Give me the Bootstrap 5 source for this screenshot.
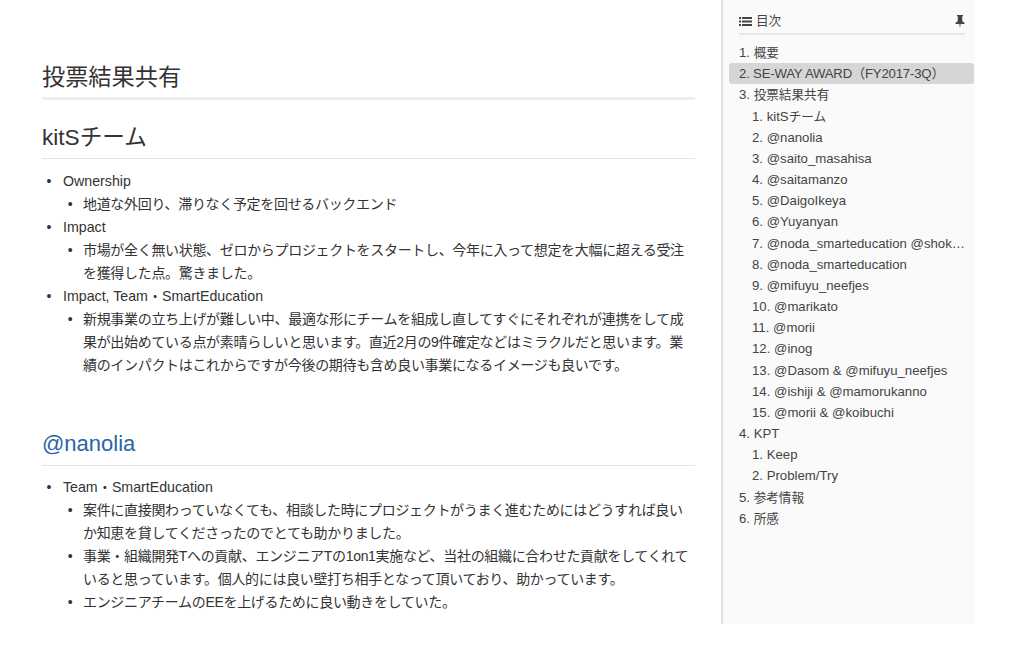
<!DOCTYPE html>
<html lang="ja">
<head>
  <meta charset="UTF-8" />
  <meta name="viewport" content="width=device-width, initial-scale=1.0"/>
  <title>投票結果共有</title>
  <link href="https://cdn.jsdelivr.net/npm/bootstrap@5.3.2/dist/css/bootstrap.min.css" rel="stylesheet"/>
  <style>
    html, body { height: 646px; overflow: hidden; }
    body {
      background: #fff;
      color: #333;
      font-family: "Liberation Sans", "Noto Sans CJK JP", sans-serif;
      font-size: 14px;
    }
    .page-wrap { height: 624px; }
    .doc-body { width: 653px; margin-left: 42px; margin-right: 26px; overflow: hidden; }
    .doc-title {
      font-size: 23.2px; font-weight: 400; line-height: 32px;
      margin: 61px 0 0; padding-bottom: 4px;
      border-bottom: 3px solid #eee;
    }
    .doc-sub {
      font-size: 22px; font-weight: 400; line-height: 30px;
      margin: 0; padding-bottom: 5px;
      border-bottom: 1px solid #e5e5e5;
    }
    .doc-sub.first { margin-top: 23px; font-size: 22.6px; }
    .doc-sub.next { margin-top: 52px; padding-bottom: 6px; }
    .doc-sub a { color: #2a64a8; text-decoration: none; }
    .doc-list { margin: 11px 0 0; padding-left: 21px; line-height: 23px; font-size: 14.2px; }
    .doc-sub.next + .doc-list { margin-top: 10px; }
    .doc-list ul { margin: 0; padding-left: 20px; list-style: disc; font-size: 14px; letter-spacing: -.32px; }
    .doc-list li::marker { content: "•\00a0\00a0\00a0"; font-size: 14px; }
    .toc-pane {
      width: 254px; height: 624px; flex: none;
      background: #fafafa; border-left: 2px solid #e2e2e2;
      font-size: 13.2px; color: #444;
    }
    .toc-ja { font-size: 12.6px; }
    .toc-head {
      margin: 12px 10px 0 16px; height: 23px; padding-bottom: 3px;
      border-bottom: 2px solid #e6e6e6;
    }
    .toc-list, .toc-list ol { list-style: none; margin: 0; padding: 0; }
    .toc-list { margin-top: 7px; }
    .toc-list li > span { display: block; height: 21.18px; line-height: 21px; padding-left: 16px; white-space: nowrap; overflow: hidden; text-overflow: ellipsis; }
    .toc-list ol li > span { padding-left: 29px; padding-right: 9px; }
    .toc-list li > span.on { background: #d6d6d6; border-radius: 3px; margin: 0 1px 0 6px; padding-left: 10px; letter-spacing: -.2px; }
  </style>
</head>
<body>
  <div class="page-wrap d-flex">
    <main class="doc-body">
      <h2 class="doc-title">投票結果共有</h2>

      <h3 class="doc-sub first">kitSチーム</h3>
      <ul class="doc-list">
        <li>Ownership
          <ul><li>地道な外回り、滞りなく予定を回せるバックエンド</li></ul>
        </li>
        <li>Impact
          <ul><li>市場が全く無い状態、ゼロからプロジェクトをスタートし、今年に入って想定を大幅に超える受注を獲得した点。驚きました。</li></ul>
        </li>
        <li>Impact, Team・SmartEducation
          <ul><li>新規事業の立ち上げが難しい中、最適な形にチームを組成し直してすぐにそれぞれが連携をして成果が出始めている点が素晴らしいと思います。直近2月の9件確定などはミラクルだと思います。業績のインパクトはこれからですが今後の期待も含め良い事業になるイメージも良いです。</li></ul>
        </li>
      </ul>

      <h3 class="doc-sub next"><a href="#">@nanolia</a></h3>
      <ul class="doc-list">
        <li>Team・SmartEducation
          <ul>
            <li>案件に直接関わっていなくても、相談した時にプロジェクトがうまく進むためにはどうすれば良いか知恵を貸してくださったのでとても助かりました。</li>
            <li>事業・組織開発Tへの貢献、エンジニアTの1on1実施など、当社の組織に合わせた貢献をしてくれていると思っています。個人的には良い壁打ち相手となって頂いており、助かっています。</li>
            <li>エンジニアチームのEEを上げるために良い動きをしていた。</li>
          </ul>
        </li>
      </ul>
    </main>

    <aside class="toc-pane">
      <div class="toc-head d-flex align-items-center justify-content-between">
        <span class="d-flex align-items-center gap-1">
          <svg width="13" height="11" viewBox="0 0 13 11" fill="#444"><path d="M0 1h2v2H0zM3 1h10v2H3zM0 4.5h2v2H0zM3 4.5h10v2H3zM0 8h2v2H0zM3 8h10v2H3z"/></svg>
          <span class="toc-ja">目次</span>
        </span>
        <svg width="10" height="13" viewBox="0 0 10 13" fill="#444"><path d="M2 0h6v1.2H7.2V6L9.5 8v1H5.6L5 13l-.6-4H.5V8l2.3-2V1.2H2z"/></svg>
      </div>
      <ol class="toc-list">
        <li><span>1. <span class="toc-ja">概要</span></span></li>
        <li><span class="on">2. SE-WAY AWARD（FY2017-3Q）</span></li>
        <li><span>3. <span class="toc-ja">投票結果共有</span></span>
          <ol>
            <li><span>1. kitS<span class="toc-ja">チーム</span></span></li>
            <li><span>2. @nanolia</span></li>
            <li><span>3. @saito_masahisa</span></li>
            <li><span>4. @saitamanzo</span></li>
            <li><span>5. @DaigoIkeya</span></li>
            <li><span>6. @Yuyanyan</span></li>
            <li><span>7. @noda_smarteducation @shokota</span></li>
            <li><span>8. @noda_smarteducation</span></li>
            <li><span>9. @mifuyu_neefjes</span></li>
            <li><span>10. @marikato</span></li>
            <li><span>11. @morii</span></li>
            <li><span>12. @inog</span></li>
            <li><span>13. @Dasom &amp; @mifuyu_neefjes</span></li>
            <li><span>14. @ishiji &amp; @mamorukanno</span></li>
            <li><span>15. @morii &amp; @koibuchi</span></li>
          </ol>
        </li>
        <li><span>4. KPT</span>
          <ol>
            <li><span>1. Keep</span></li>
            <li><span>2. Problem/Try</span></li>
          </ol>
        </li>
        <li><span>5. <span class="toc-ja">参考情報</span></span></li>
        <li><span>6. <span class="toc-ja">所感</span></span></li>
      </ol>
    </aside>
  </div>
  <script src="https://cdn.jsdelivr.net/npm/bootstrap@5.3.2/dist/js/bootstrap.bundle.min.js"></script>
</body>
</html>
